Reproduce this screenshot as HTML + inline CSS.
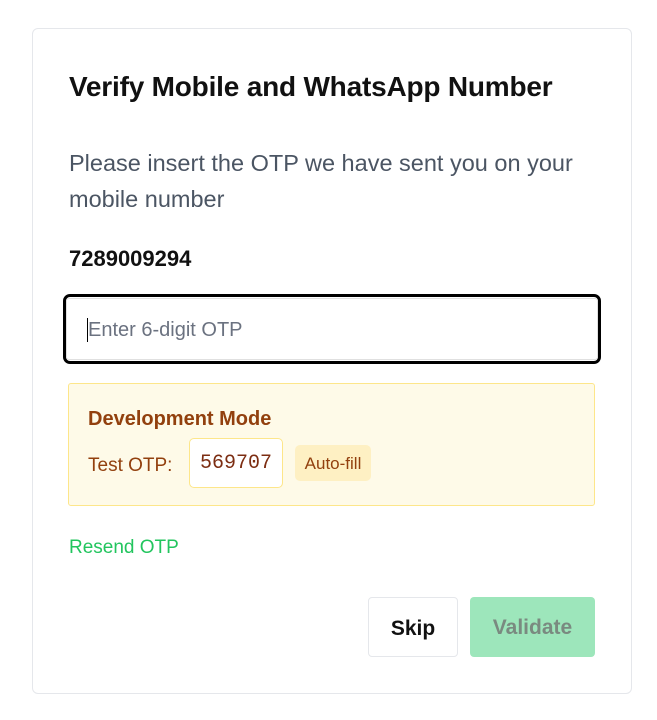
<!DOCTYPE html>
<html><head><style>
body{margin:0;background:#fff;font-family:"Liberation Sans",sans-serif;width:657px;height:720px;position:relative;overflow:hidden}
.card{position:absolute;left:32px;top:28px;width:600px;height:666px;border:1px solid #e5e7eb;border-radius:6px;box-sizing:border-box}
.abs{position:absolute}
</style></head><body>
<div class="card"></div>
<div class="abs" style="left:69px;top:71px;font-size:28px;font-weight:bold;color:#111;letter-spacing:-0.2px">Verify Mobile and WhatsApp Number</div>
<div class="abs" style="left:69px;top:145px;width:520px;font-size:23.5px;line-height:36px;color:#4b5563">Please insert the OTP we have sent you on your mobile number</div>
<div class="abs" style="left:69px;top:246px;font-size:22px;font-weight:bold;color:#111">7289009294</div>
<div class="abs" style="left:63px;top:294px;width:538px;height:70px;border:3px solid #000;border-radius:7px;box-sizing:border-box"></div>
<div class="abs" style="left:66px;top:298px;width:532px;height:62px;border:1px solid #e0e0e0;border-radius:3px;box-sizing:border-box"></div>
<div class="abs" style="left:87px;top:318px;width:1px;height:24px;background:#000"></div>
<div class="abs" style="left:88px;top:319px;font-size:20px;color:#6b7280">Enter 6-digit OTP</div>
<div class="abs" style="left:68px;top:383px;width:527px;height:123px;background:#fefae8;border:1px solid #fde68a;border-radius:3px;box-sizing:border-box"></div>
<div class="abs" style="left:88px;top:408px;font-size:20px;font-weight:bold;color:#92400e">Development Mode</div>
<div class="abs" style="left:88px;top:455px;font-size:19px;color:#92400e">Test OTP:</div>
<div class="abs" style="left:189px;top:438px;width:94px;height:50px;background:#fff;border:1px solid #fde68a;border-radius:5px;box-sizing:border-box;font-family:'Liberation Mono',monospace;font-size:20px;color:#7c2d12;text-align:center;line-height:50px">569707</div>
<div class="abs" style="left:295px;top:445px;width:76px;height:36px;background:#fef0c3;border-radius:5px;font-size:17px;color:#92400e;text-align:center;line-height:37px">Auto-fill</div>
<div class="abs" style="left:69px;top:537px;font-size:19px;color:#22c55e">Resend OTP</div>
<div class="abs" style="left:368px;top:597px;width:90px;height:60px;border:1px solid #e5e7eb;border-radius:4px;box-sizing:border-box;font-size:21px;font-weight:bold;color:#111;text-align:center;line-height:62px">Skip</div>
<div class="abs" style="left:470px;top:597px;width:125px;height:60px;background:#9de6bb;border-radius:4px;font-size:21px;font-weight:bold;color:#7a8a80;text-align:center;line-height:62px">Validate</div>
</body></html>
